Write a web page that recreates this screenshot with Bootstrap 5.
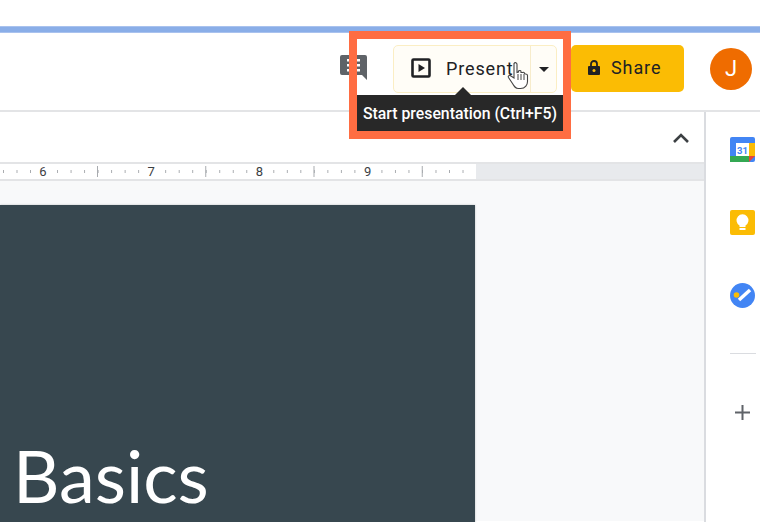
<!DOCTYPE html>
<html lang="en"><head><meta charset="utf-8"><title>Present</title>
<link rel="stylesheet" href="https://cdn.jsdelivr.net/npm/bootstrap@5.3.0/dist/css/bootstrap.min.css">
<style>
html,body{width:760px;height:522px;overflow:hidden;background:#fff;font-family:Roboto,"Liberation Sans",sans-serif}
.stage{position:relative;width:760px;height:522px;overflow:hidden}
.topgap{height:26px}
.bluebar{height:7px;background:#8aaee8;border-top:1px solid #a9c2ee;border-bottom:1px solid #a9c2ee}
.hdr{height:79px;border-bottom:2px solid #e3e4e6;padding:12px 8px 0 0}
.cmt{margin-right:26px;margin-top:10px}
.pres{width:164px;height:48px;border:1px solid #fbeec4;border-radius:5px;background:#fffdf7;color:#202124}
.pres-main{width:137px;border-right:1px solid #f7eccb;padding-left:17px;padding-bottom:2px;gap:15px;font-size:18px;letter-spacing:.85px}
.pres-arrow{flex:1}
.tri{width:0;height:0;border-left:5px solid transparent;border-right:5px solid transparent;border-top:5px solid #202124}
.share{width:113px;height:47px;margin-left:14px;margin-right:26px;background:#fbbc04;border-radius:5px;color:#202124;font-size:18px;letter-spacing:.9px;gap:10px;padding-left:16px;padding-bottom:2px}
.avatar{width:42px;height:42px;border-radius:50%;background:#ef6c00;color:#fff;font-size:22px;font-weight:400;margin-top:3px;padding-bottom:2px}
.work{height:410px}
.rail{width:56px;border-left:2px solid #dadce0;padding-top:25px}
.rail-item{height:25px;margin:0 0 48px 24px}
.rail-rule{width:26px;height:1px;background:#dadce0;margin:-3px 0 0 24px}
.rail-plus{margin:51px 0 0 29px}
.tools{height:50px;padding-right:14px;padding-top:2px}
.ruler{height:19px;border-top:2px solid #e3e4e6;border-bottom:2px solid #e3e4e6;background:#e8eaed}
.ruler-on{width:476px;height:15px;font-size:13px;line-height:15px;color:#3c4043;gap:92.25px;padding-left:35px;background:linear-gradient(90deg,#a8abaf 1px,transparent 1px) 3px 6px/13.53px 3px repeat-x,linear-gradient(90deg,#a8abaf 1px,transparent 1px) 97px 2px/108.25px 11px repeat-x,#fff}
.num{flex:0 0 16px;text-align:center;background:#fff}
.canvas{height:340px;background:#f8f9fa;padding-top:24px}
.slide{width:475px;height:330px;background:#37474f;box-shadow:0 0 2px rgba(60,64,67,.3);color:#fff;font-family:Lato,sans-serif;font-weight:400;font-size:72px;line-height:1;padding:234px 0 0 13px}
.frame{position:absolute;left:349px;top:31px;width:222px;height:108px;border:8px solid #ff6d42}
.tip{position:absolute;left:0;top:56px;width:206px;height:36px;background:#282828;color:#fff;font-size:15.800px;font-weight:500;line-height:37px;text-align:center;white-space:nowrap}
.tip-arrow{position:absolute;left:98px;top:48px;width:0;height:0;border-left:8px solid transparent;border-right:8px solid transparent;border-bottom:8px solid #282828}
.hand{position:absolute;left:507px;top:61px}
</style></head><body>
<div class="stage">
<div class="topgap"></div>
<div class="bluebar"></div>
<div class="hdr d-flex justify-content-end align-items-start">
  <svg class="cmt" width="27" height="25" viewBox="0 0 27 25"><path d="M2 0h23a2 2 0 0 1 2 2v23l-5-5H2a2 2 0 0 1-2-2V2a2 2 0 0 1 2-2z" fill="#5f6368"/><path d="M7 4h13v2.500H7zM7 9h13v2.500H7zM7 14h13v2.500H7z" fill="#fff"/></svg>
  <div class="pres d-flex">
    <div class="pres-main d-flex align-items-center">
      <svg width="20" height="20" viewBox="0 0 20 20"><rect x="1.500" y="1.500" width="17" height="17" rx="1" fill="none" stroke="#202124" stroke-width="2.600"/><path d="M7.500 6l6.500 4-6.500 4z" fill="#202124"/></svg>
      <span>Present</span>
    </div>
    <div class="pres-arrow d-flex align-items-center justify-content-center"><div class="tri"></div></div>
  </div>
  <div class="share d-flex align-items-center">
    <svg width="14" height="18" viewBox="0 0 14 18"><path d="M2 7h10a1 1 0 0 1 1 1v7a1 1 0 0 1-1 1H2a1 1 0 0 1-1-1V8a1 1 0 0 1 1-1z" fill="#202124"/><path d="M4 7V5a3 3 0 0 1 6 0v2" fill="none" stroke="#202124" stroke-width="1.800"/><circle cx="7" cy="11.500" r="1.500" fill="#fbbc04"/></svg>
    <span>Share</span>
  </div>
  <div class="avatar d-flex align-items-center justify-content-center">J</div>
</div>
<div class="work d-flex">
  <div class="flex-grow-1">
    <div class="tools d-flex justify-content-end align-items-center">
      <svg width="18" height="12" viewBox="0 0 18 12"><path d="M2 10l7-7 7 7" fill="none" stroke="#3c4043" stroke-width="2.600"/></svg>
    </div>
    <div class="ruler">
      <div class="ruler-on d-flex">
        <span class="num">6</span>
        <span class="num">7</span>
        <span class="num">8</span>
        <span class="num">9</span>
      </div>
    </div>
    <div class="canvas">
      <div class="slide">Basics</div>
    </div>
  </div>
  <div class="rail d-flex flex-column flex-shrink-0">
    <div class="rail-item"><svg class="d-block" width="25" height="25" viewBox="0 0 25 25"><rect width="25" height="25" rx="2" fill="#4285f4"/><rect x="19" y="6" width="6" height="13" fill="#fbbc04"/><rect y="19" width="19" height="6" fill="#34a853"/><path d="M19 25v-6h6z" fill="#ea4335"/><rect x="6" y="6" width="13" height="13" fill="#fff"/><text x="12.500" y="16.500" font-size="9.500" font-weight="700" text-anchor="middle" fill="#4285f4" font-family="Roboto">31</text></svg></div>
    <div class="rail-item"><svg class="d-block" width="25" height="25" viewBox="0 0 25 25"><rect width="25" height="25" rx="2" fill="#fbbc04"/><path d="M9.500 15.500a6 6 0 1 1 6 0V17h-6z" fill="#fff"/><rect x="9.500" y="18" width="6" height="2" fill="#fff"/></svg></div>
    <div class="rail-item"><svg class="d-block" width="25" height="25" viewBox="0 0 25 25"><circle cx="12.500" cy="12.500" r="12.500" fill="#4285f4"/><path d="M9 17L20 7" stroke="#fff" stroke-width="3.500"/><circle cx="6.500" cy="12" r="2.800" fill="#fbbc04"/></svg></div>
    <div class="rail-rule"></div>
    <svg class="rail-plus" width="15" height="15" viewBox="0 0 15 15"><path d="M7.500 0v15M0 7.500h15" stroke="#5f6368" stroke-width="2"/></svg>
  </div>
</div>
<div class="frame">
  <div class="tip-arrow"></div>
  <div class="tip">Start presentation (Ctrl+F5)</div>
</div>
<svg class="hand" width="22" height="30" viewBox="0 0 22 30"><path d="M7 2.500c1-1.500 3-1 3 1v8l1.500-.5v-1c1-1 2.500-.5 2.500.5v1l1.500 0c1-.5 2 0 2 1l1 .5c1 0 2 .5 2 1.500v6c0 3-2 7-7 7h-2c-3 0-4-1.500-6-5l-4-6c-.8-1.500.8-3 2.500-1.500L7 17z" fill="#fff" stroke="#444" stroke-width="1.100"/><path d="M11 13v6M14 13v6M17 13v6" stroke="#444" stroke-width="1"/></svg>
</div>
</body></html>
